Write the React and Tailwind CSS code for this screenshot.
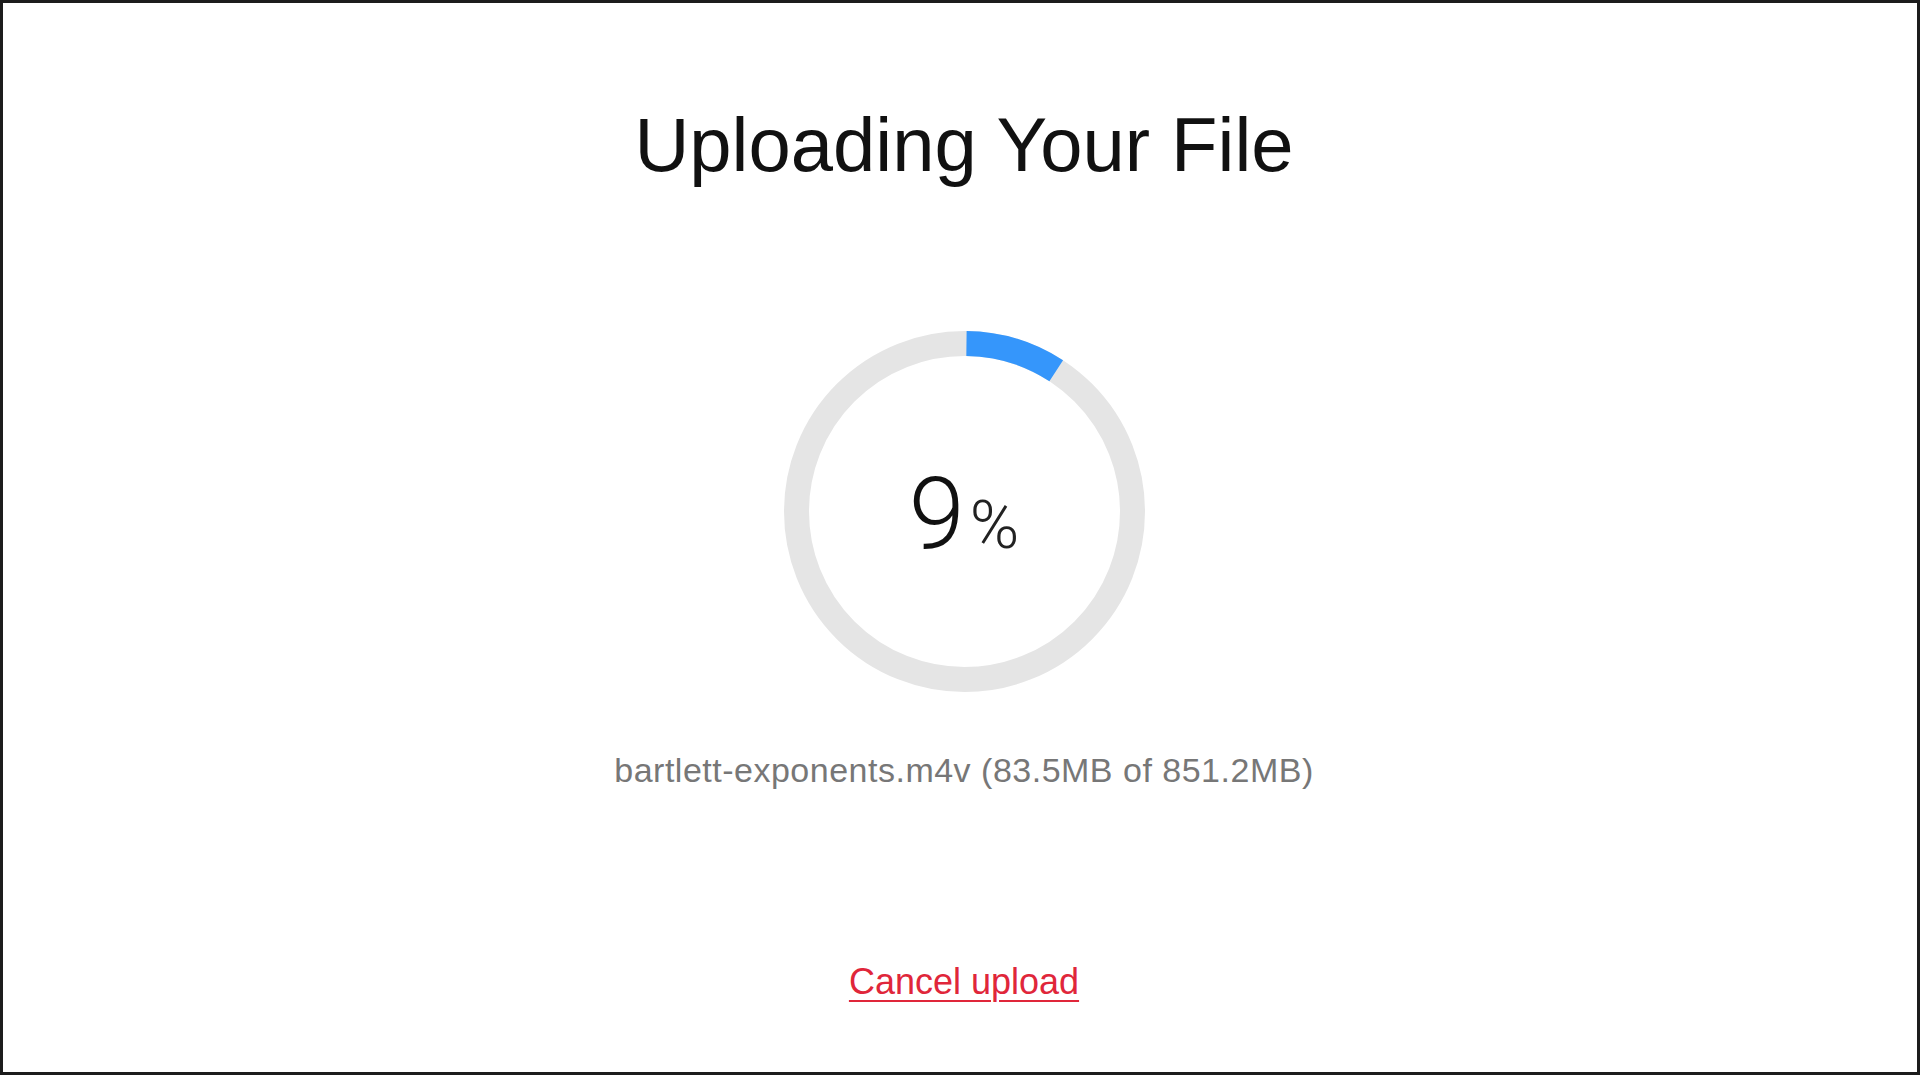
import React from 'react';

const RADIUS = 168;
const STROKE = 25;
const CIRC = 2 * Math.PI * RADIUS;

function ProgressRing({ percent }) {
  const size = RADIUS * 2 + STROKE;
  const done = (percent / 100) * CIRC;

  return (
    <div className="relative w-[361px] h-[361px]">
      <svg width={size} height={size} viewBox={`0 0 ${size} ${size}`} className="-rotate-90">
        <circle cx={size / 2} cy={size / 2} r={RADIUS} fill="none" stroke="#e5e5e5" strokeWidth={STROKE} />
        <circle
          cx={size / 2}
          cy={size / 2}
          r={RADIUS}
          fill="none"
          stroke="#3596fb"
          strokeWidth={STROKE}
          strokeDasharray={`${done} ${CIRC}`}
          strokeDashoffset={-2}
        />
      </svg>
      <div className="absolute inset-0 flex items-center justify-center">
        <div className="flex items-baseline gap-[5px] text-[#111] font-['Roboto',sans-serif] font-light translate-y-[2px]">
          <span className="text-[101px] leading-none">{percent}</span>
          <span className="text-[67px] leading-none text-[#222]">%</span>
        </div>
      </div>
    </div>
  );
}

export default function App() {
  return (
    <div className="w-full h-[1075px] bg-white border-[3px] border-[#1c1c1c] overflow-hidden">
      <div className="flex flex-col items-center pt-[104px] pl-2 font-['Liberation_Sans',Arial,sans-serif]">
        <h1 className="text-[76px] leading-none text-[#111] font-normal">Uploading Your File</h1>

        <div className="mt-[148px]">
          <ProgressRing percent={9} />
        </div>

        <p className="mt-[61px] text-[34px] leading-none text-[#777] tracking-[0.5px]">
          bartlett-exponents.m4v (83.5MB of 851.2MB)
        </p>

        <a
          href="#"
          className="mt-[177px] text-[36px] leading-none text-[#e0263a] underline underline-offset-[6px] decoration-[2px]"
        >
          Cancel upload
        </a>
      </div>
    </div>
  );
}
